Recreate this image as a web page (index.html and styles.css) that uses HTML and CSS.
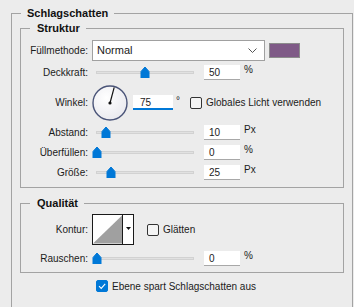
FILE: index.html
```html
<!DOCTYPE html>
<html lang="de">
<head>
    <meta charset="UTF-8">
    <title>Schlagschatten</title>
    <link rel="stylesheet" href="styles.css">
</head>
<body>

<fieldset class="group">
    <legend>Schlagschatten</legend>

    <fieldset class="panel structure">
        <legend>Struktur</legend>

        <div class="row">
            <label class="label">Füllmethode:</label>
            <div class="select">
                <span>Normal</span>
                <svg class="chevron" width="9" height="6" viewBox="0 0 9 6"><polyline points="0.5,0.5 4.5,4.5 8.5,0.5" fill="none" stroke="#555" stroke-width="1"/></svg>
            </div>
            <div class="swatch"></div>
        </div>

        <div class="row">
            <label class="label">Deckkraft:</label>
            <div class="slider">
                <div class="track"></div>
                <svg class="thumb" style="left: 48px" width="10" height="12" viewBox="0 0 10 12"><path d="M1 12 V5.5 L5 1 L9 5.5 V12 Z" fill="#0078d7" stroke="#0078d7" stroke-linejoin="round"/></svg>
            </div>
            <div class="field">50</div>
            <span class="unit">%</span>
        </div>

        <div class="row tall">
            <label class="label">Winkel:</label>
            <svg class="dial" width="36" height="36" viewBox="0 0 36 36">
                <defs>
                    <radialGradient id="dialFill" cx="40%" cy="35%" r="70%">
                        <stop offset="0" stop-color="#ffffff"/>
                        <stop offset="1" stop-color="#e9e9ee"/>
                    </radialGradient>
                </defs>
                <circle cx="18" cy="18" r="17" fill="url(#dialFill)" stroke="#4a5478" stroke-width="1.4"/>
                <line x1="18" y1="18" x2="22.2" y2="2.3" stroke="#111" stroke-width="1.2"/>
                <circle cx="18" cy="18" r="1.6" fill="#111"/>
            </svg>
            <div class="field angle">75</div>
            <span class="unit degree">°</span>
            <span class="checkbox"></span>
            <span class="check-label">Globales Licht verwenden</span>
        </div>

        <div class="row">
            <label class="label">Abstand:</label>
            <div class="slider">
                <div class="track"></div>
                <svg class="thumb" style="left: 9px" width="10" height="12" viewBox="0 0 10 12"><path d="M1 12 V5.5 L5 1 L9 5.5 V12 Z" fill="#0078d7" stroke="#0078d7" stroke-linejoin="round"/></svg>
            </div>
            <div class="field">10</div>
            <span class="unit">Px</span>
        </div>

        <div class="row">
            <label class="label">Überfüllen:</label>
            <div class="slider">
                <div class="track"></div>
                <svg class="thumb" style="left: 0px" width="10" height="12" viewBox="0 0 10 12"><path d="M1 12 V5.5 L5 1 L9 5.5 V12 Z" fill="#0078d7" stroke="#0078d7" stroke-linejoin="round"/></svg>
            </div>
            <div class="field">0</div>
            <span class="unit">%</span>
        </div>

        <div class="row">
            <label class="label">Größe:</label>
            <div class="slider">
                <div class="track"></div>
                <svg class="thumb" style="left: 14px" width="10" height="12" viewBox="0 0 10 12"><path d="M1 12 V5.5 L5 1 L9 5.5 V12 Z" fill="#0078d7" stroke="#0078d7" stroke-linejoin="round"/></svg>
            </div>
            <div class="field">25</div>
            <span class="unit">Px</span>
        </div>
    </fieldset>

    <fieldset class="panel quality">
        <legend>Qualität</legend>

        <div class="row contour-row">
            <label class="label">Kontur:</label>
            <div class="contour">
                <svg class="contour-preview" width="30" height="29" viewBox="0 0 30 29"><polygon points="0,29 30,0 30,29" fill="#a0a0a0"/></svg>
                <div class="contour-arrow">
                    <svg width="5" height="3" viewBox="0 0 5 3"><polygon points="0,0 5,0 2.5,3" fill="#111"/></svg>
                </div>
            </div>
            <span class="checkbox smooth"></span>
            <span class="check-label">Glätten</span>
        </div>

        <div class="row">
            <label class="label">Rauschen:</label>
            <div class="slider">
                <div class="track"></div>
                <svg class="thumb" style="left: 0px" width="10" height="12" viewBox="0 0 10 12"><path d="M1 12 V5.5 L5 1 L9 5.5 V12 Z" fill="#0078d7" stroke="#0078d7" stroke-linejoin="round"/></svg>
            </div>
            <div class="field">0</div>
            <span class="unit">%</span>
        </div>
    </fieldset>

    <div class="knockout">
        <span class="checkbox checked">
            <svg width="10" height="10" viewBox="0 0 10 10"><polyline points="2,5.2 4.2,7.4 8.2,2.8" fill="none" stroke="#fff" stroke-width="1.1"/></svg>
        </span>
        <span class="check-label">Ebene spart Schlagschatten aus</span>
    </div>
</fieldset>

</body>
</html>
```

FILE: styles.css
```css
* {
    margin: 0;
    padding: 0;
    box-sizing: border-box;
}

html, body {
    overflow: hidden;
}

body {
    font-family: 'Liberation Sans', Arial, sans-serif;
    font-size: 10px;
    color: #1b1b1b;
    background-color: #ececec;
    padding-top: 6px;
}

fieldset {
    border: 1px solid #a3a3a3;
}

legend {
    font-size: 11px;
    font-weight: bold;
    line-height: 14px;
    color: #111;
}

.group {
    margin: 0 1px 0 11px;
    padding: 1px 8px 0 8px;
    height: 330px;
}

.group > legend {
    margin-left: 1px;
    padding: 0 6px;
}

.panel {
    padding: 5px 8px 7px 8px;
}

.panel > legend {
    margin-left: 1px;
    padding: 0 6px 0 7px;
}

.structure {
    display: flex;
    flex-direction: column;
    gap: 5px;
}

.quality {
    margin-top: 8px;
    padding-top: 4px;
    padding-bottom: 6px;
    display: flex;
    flex-direction: column;
    gap: 6px;
}

.row {
    display: flex;
    align-items: center;
    height: 15px;
}

.row:first-of-type {
    height: 20px;
}

.row.tall {
    height: 35px;
}

.row.contour-row {
    height: 31px;
}

.label {
    width: 59px;
    text-align: right;
    white-space: nowrap;
    margin-right: 4px;
}

.select {
    width: 173px;
    height: 21px;
    background-color: #fff;
    border: 1px solid #a0a0a0;
    display: flex;
    align-items: center;
    justify-content: space-between;
    padding: 0 7px 0 4px;
    font-size: 11px;
}

.chevron {
    margin-top: 1px;
}

.swatch {
    width: 31px;
    height: 15px;
    margin-left: 4px;
    background-color: #7f5a87;
    border: 1px solid #8c8c8c;
}

.slider {
    position: relative;
    width: 106px;
    height: 15px;
    margin-right: 6px;
}

.track {
    margin: 6px 4px 0 4px;
    height: 3px;
    background-color: #e1e1e1;
    border: 1px solid #d2d2d2;
}

.thumb {
    position: absolute;
    top: 1px;
}

.field {
    width: 36px;
    height: 15px;
    background-color: #fff;
    border-bottom: 1px solid #a8a8a8;
    padding-left: 5px;
    line-height: 15px;
}

.unit {
    align-self: flex-start;
    line-height: 10px;
    margin-left: 4px;
}

.dial {
    flex-shrink: 0;
}

.field.angle {
    width: 40px;
    margin-left: 5px;
    padding-left: 7px;
    border-bottom: 2px solid #0078d7;
}

.unit.degree {
    align-self: center;
    line-height: 10px;
    margin-bottom: 4px;
    margin-left: 3px;
}

.checkbox {
    width: 12px;
    height: 12px;
    border: 1px solid #333;
    border-radius: 2px;
    background-color: #f4f4f4;
    flex-shrink: 0;
    display: flex;
    align-items: center;
    justify-content: center;
}

.row.tall .checkbox {
    margin-left: 10px;
}

.check-label {
    margin-left: 4px;
    white-space: nowrap;
}

.contour {
    width: 42px;
    height: 31px;
    border: 1px solid #1a1a1a;
    background-color: #fff;
    display: flex;
}

.contour-preview {
    display: block;
    border-right: 1px solid #1a1a1a;
    width: 30px;
    height: 29px;
}

.contour-arrow {
    flex: 1;
    display: flex;
    justify-content: center;
    padding-top: 12px;
}

.contour-arrow svg {
    display: block;
}

.checkbox.smooth {
    margin-left: 13px;
}

.knockout {
    display: flex;
    align-items: center;
    margin-top: 7px;
    padding-left: 76px;
}

.checkbox.checked {
    background-color: #0078d7;
    border-color: #0078d7;
}

.checkbox.checked svg {
    display: block;
}
```
